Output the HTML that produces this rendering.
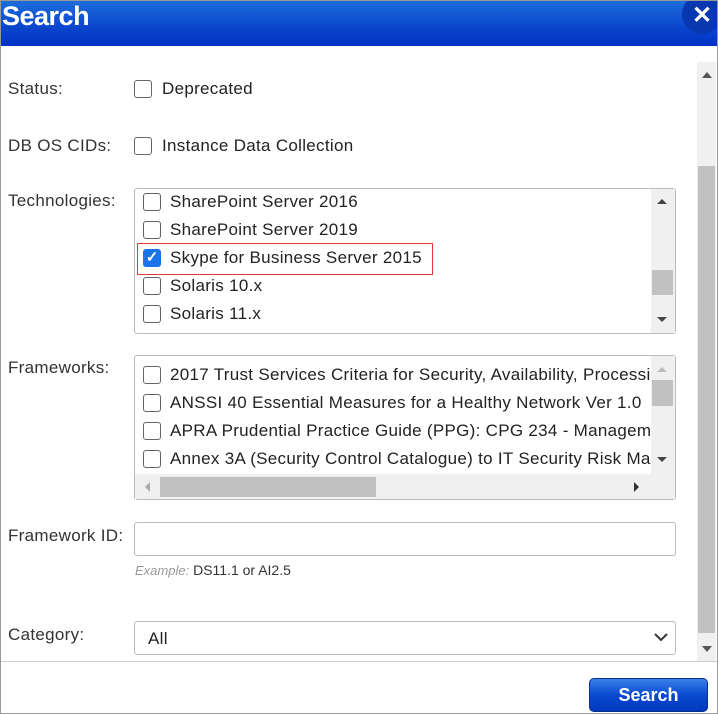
<!DOCTYPE html>
<html><head><meta charset="utf-8"><style>
*{margin:0;padding:0;box-sizing:border-box}
body{width:718px;height:714px;overflow:hidden;background:#fff;font-family:"Liberation Sans",Arial,sans-serif;color:#333;position:relative}
.a{position:absolute}
.frame{left:0;top:0;width:718px;height:714px;border:1px solid #999}
.hdr{left:0;top:0;width:718px;height:46px;background:linear-gradient(#1c6fdc,#0a45cc 60%,#0033c4)}
.hdr span{position:absolute;left:2px;top:1px;color:#fff;font-weight:bold;font-size:27px;letter-spacing:-0.5px}
.close{left:682px;top:-6px;width:40px;height:40px;border-radius:50%;background:#0838b0;color:#fff;font-weight:bold;font-size:24px;text-align:center;line-height:44px}
.lbl{font-size:17px;color:#333;letter-spacing:0.3px}
.cb{width:18px;height:18px;border:1.5px solid #666;border-radius:3px;background:#fff}
.t{font-size:17px;color:#222;white-space:nowrap;letter-spacing:0.3px}
.box{border:1px solid #bbb;border-radius:3px;background:#fff;overflow:hidden}
.sb{background:#f0f0f0}
.th{background:#c1c1c1}
.tri{width:0;height:0;border-left:5px solid transparent;border-right:5px solid transparent}
</style></head><body>
<div class="a hdr"><span>Search</span></div>
<div class="a close">✕</div>
<div class="a frame"></div>

<div class="a sb" style="left:697px;top:62px;width:19px;height:599px"></div>
<div class="a th" style="left:698px;top:166px;width:17px;height:467px"></div>
<div class="a tri" style="left:702px;top:72px;border-bottom:6px solid #555"></div>
<div class="a tri" style="left:702px;top:646px;border-top:6px solid #555"></div>
<div class="a" style="left:1px;top:661px;width:716px;height:1px;background:#ccc"></div>

<div class="a lbl" style="left:8px;top:79px">Status:</div>
<div class="a cb" style="left:134px;top:80px"></div>
<div class="a t" style="left:162px;top:79px">Deprecated</div>

<div class="a lbl" style="left:8px;top:136px">DB OS CIDs:</div>
<div class="a cb" style="left:134px;top:137px"></div>
<div class="a t" style="left:162px;top:136px">Instance Data Collection</div>

<div class="a lbl" style="left:8px;top:191px">Technologies:</div>
<div class="a box" style="left:134px;top:188px;width:542px;height:146px"></div>
<div class="a cb" style="left:143px;top:193px"></div><div class="a t" style="left:170px;top:192px">SharePoint Server 2016</div>
<div class="a cb" style="left:143px;top:221px"></div><div class="a t" style="left:170px;top:220px">SharePoint Server 2019</div>
<div class="a" style="left:143px;top:249px;width:18px;height:18px;border-radius:3px;background:#1a73e8;color:#fff;font-size:15px;font-weight:bold;text-align:center;line-height:18px">✓</div>
<div class="a t" style="left:170px;top:248px">Skype for Business Server 2015</div>
<div class="a" style="left:137px;top:243px;width:296px;height:32px;border:1.5px solid #e53935"></div>
<div class="a cb" style="left:143px;top:277px"></div><div class="a t" style="left:170px;top:276px">Solaris 10.x</div>
<div class="a cb" style="left:143px;top:305px"></div><div class="a t" style="left:170px;top:304px">Solaris 11.x</div>
<div class="a sb" style="left:651px;top:189px;width:24px;height:144px"></div>
<div class="a th" style="left:652px;top:270px;width:21px;height:25px"></div>
<div class="a tri" style="left:657px;top:199px;border-bottom:5px solid #444"></div>
<div class="a tri" style="left:657px;top:317px;border-top:5px solid #444"></div>

<div class="a lbl" style="left:8px;top:358px">Frameworks:</div>
<div class="a box" style="left:134px;top:355px;width:542px;height:145px"></div>
<div class="a" style="left:135px;top:356px;width:516px;height:118px;overflow:hidden">
<div class="a cb" style="left:8px;top:10px"></div><div class="a t" style="left:35px;top:9px">2017 Trust Services Criteria for Security, Availability, Processing</div>
<div class="a cb" style="left:8px;top:38px"></div><div class="a t" style="left:35px;top:37px">ANSSI 40 Essential Measures for a Healthy Network Ver 1.0</div>
<div class="a cb" style="left:8px;top:66px"></div><div class="a t" style="left:35px;top:65px">APRA Prudential Practice Guide (PPG): CPG 234 - Management</div>
<div class="a cb" style="left:8px;top:94px"></div><div class="a t" style="left:35px;top:93px">Annex 3A (Security Control Catalogue) to IT Security Risk Man</div>
</div>
<div class="a sb" style="left:651px;top:356px;width:24px;height:118px"></div>
<div class="a th" style="left:652px;top:380px;width:21px;height:26px"></div>
<div class="a tri" style="left:657px;top:367px;border-bottom:5px solid #bbb"></div>
<div class="a tri" style="left:657px;top:457px;border-top:5px solid #444"></div>
<div class="a sb" style="left:135px;top:474px;width:540px;height:25px"></div>
<div class="a th" style="left:160px;top:477px;width:216px;height:20px"></div>
<div class="a" style="left:145px;top:482px;width:0;height:0;border-top:5px solid transparent;border-bottom:5px solid transparent;border-right:5px solid #aaa"></div>
<div class="a" style="left:634px;top:482px;width:0;height:0;border-top:5px solid transparent;border-bottom:5px solid transparent;border-left:5px solid #333"></div>

<div class="a lbl" style="left:8px;top:526px">Framework ID:</div>
<div class="a box" style="left:134px;top:522px;width:542px;height:34px"></div>
<div class="a" style="left:135px;top:562px;font-size:14px;color:#333"><i style="color:#999;font-size:13px">Example:</i> DS11.1 or AI2.5</div>

<div class="a lbl" style="left:8px;top:625px">Category:</div>
<div class="a box" style="left:134px;top:621px;width:542px;height:34px"></div>
<div class="a t" style="left:148px;top:629px">All</div>
<svg class="a" style="left:654px;top:632px" width="14" height="10"><path d="M1 2 L7 8 L13 2" stroke="#333" stroke-width="2" fill="none"/></svg>

<div class="a" style="left:589px;top:678px;width:119px;height:34px;border-radius:5px;border:1px solid #0a2f8a;background:linear-gradient(#3a80e8,#0a4ad0 50%,#0038bf);color:#fff;font-weight:bold;font-size:18px;text-align:center;line-height:32px">Search</div>
</body></html>
